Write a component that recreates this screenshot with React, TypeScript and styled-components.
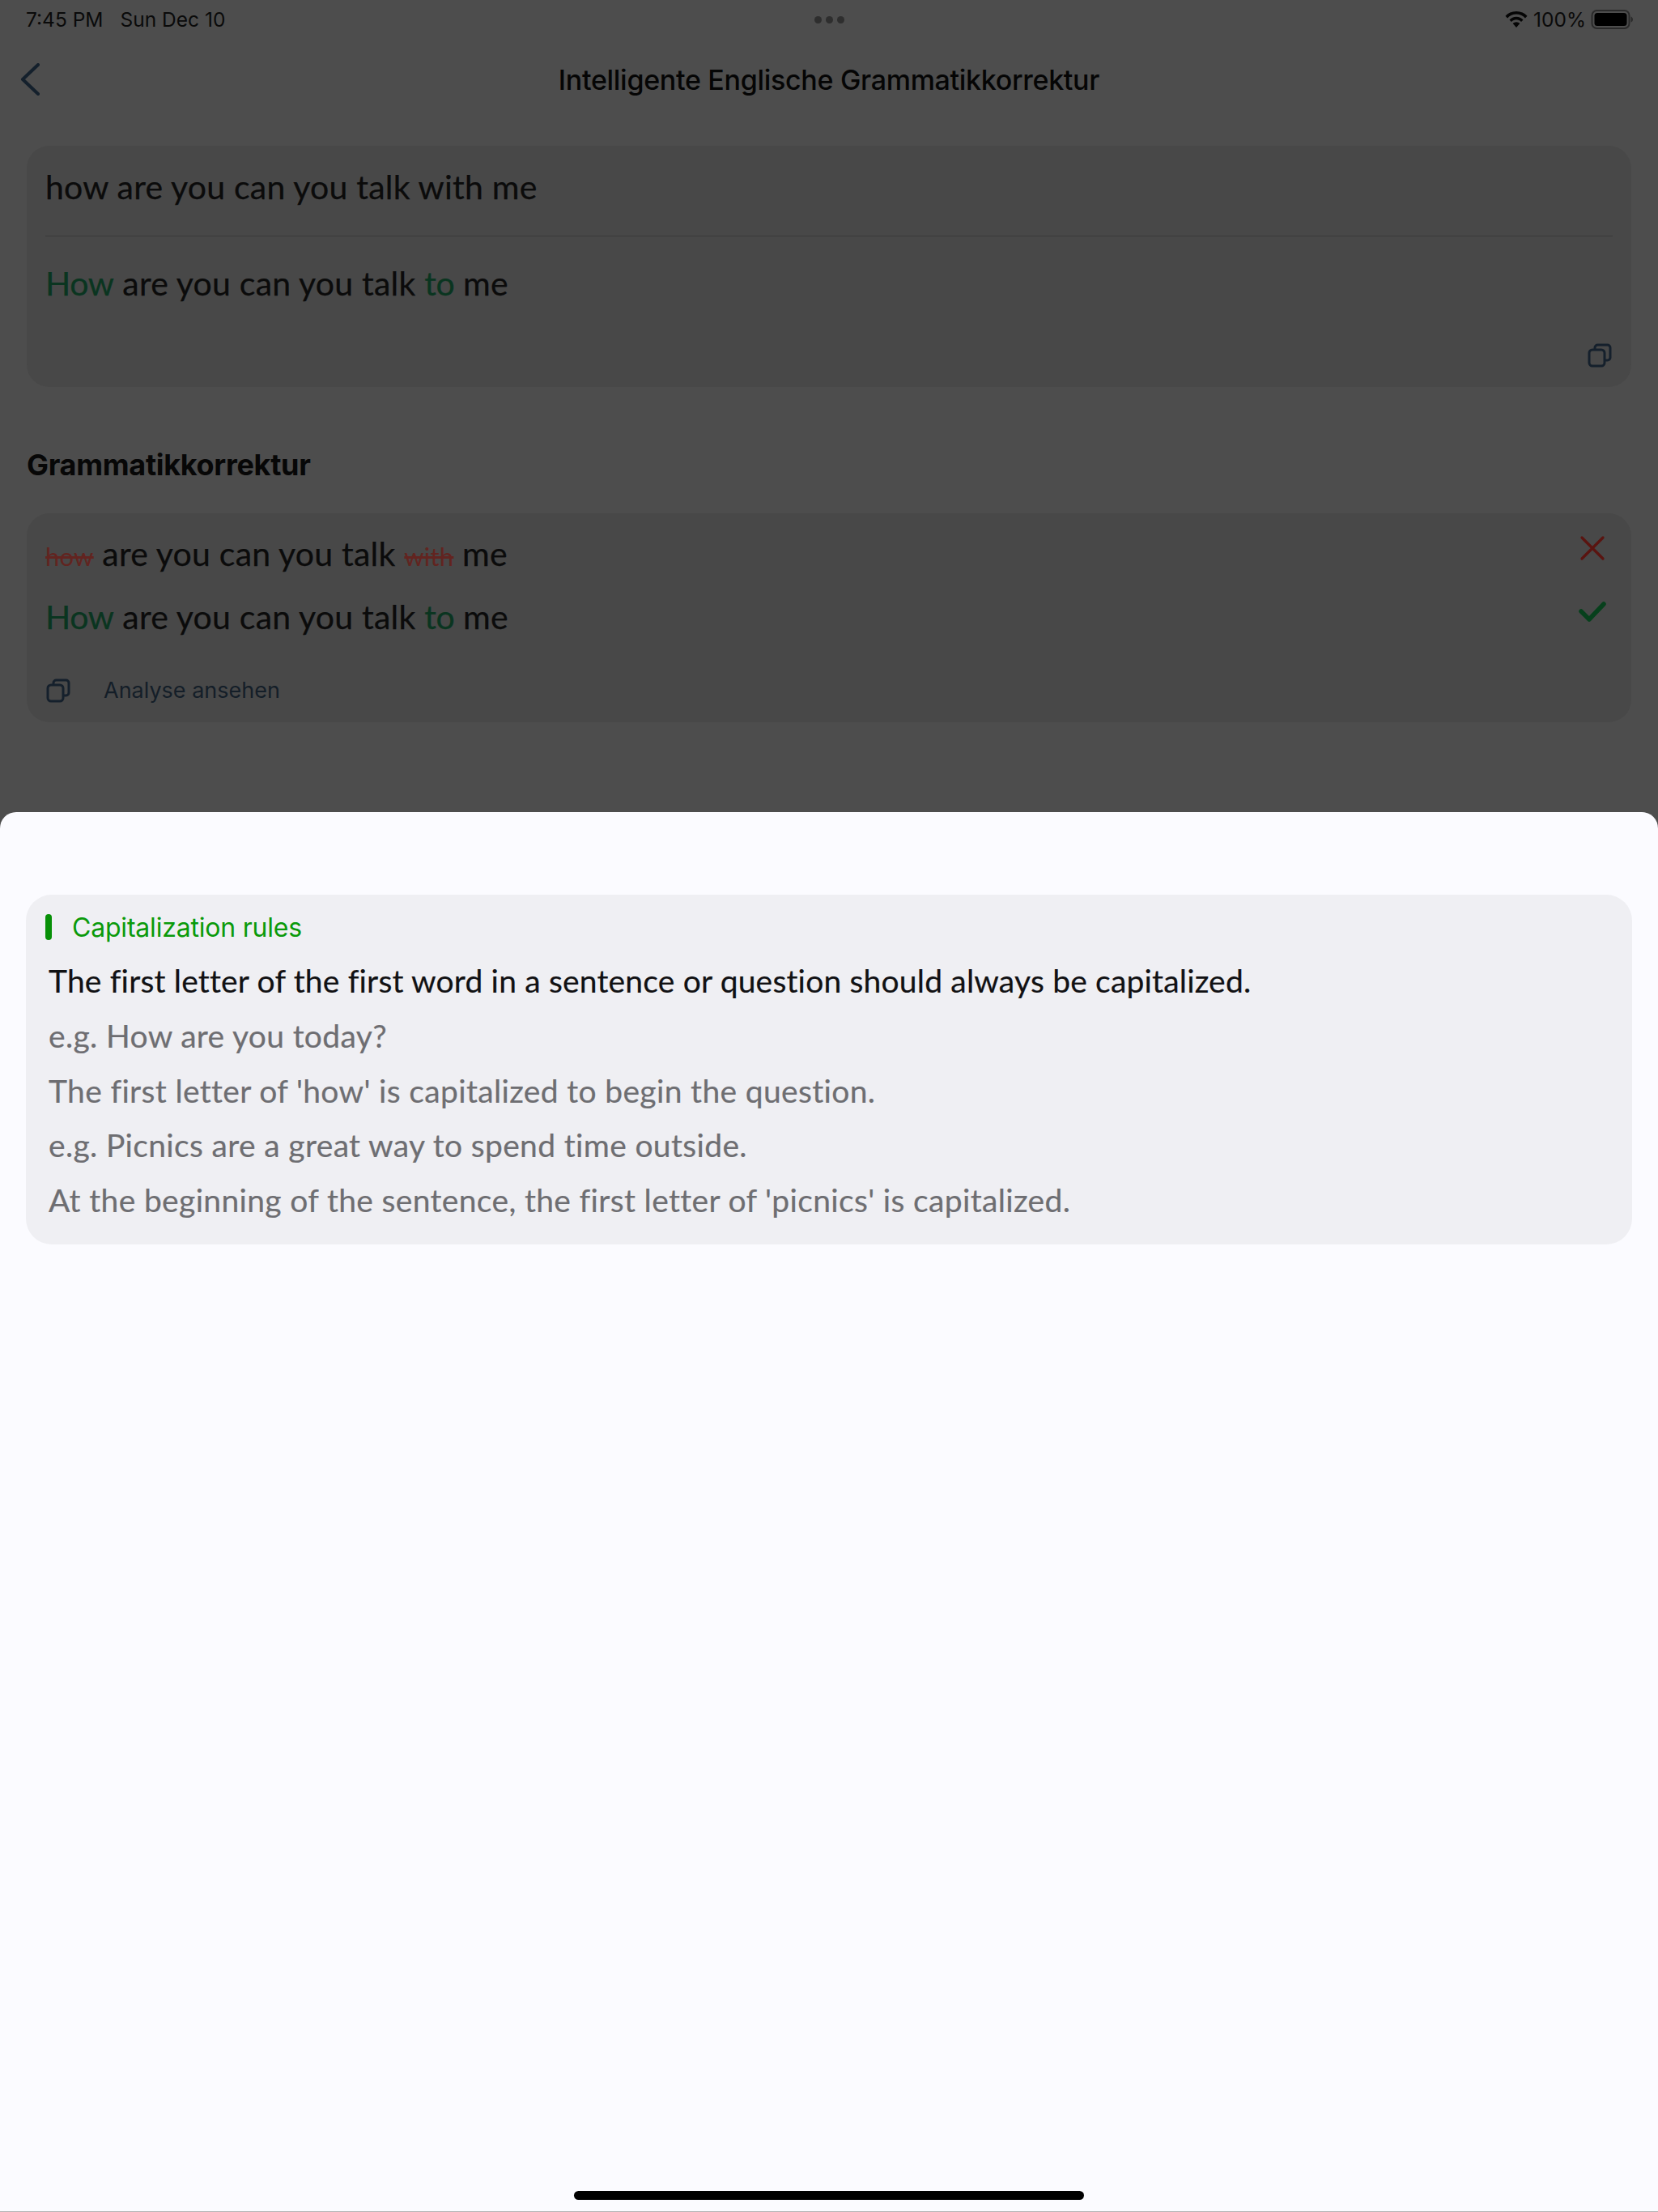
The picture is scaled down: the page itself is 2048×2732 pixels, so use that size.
import React from "react";
import styled, { createGlobalStyle } from "styled-components";

const Global = createGlobalStyle`
  html, body { margin: 0; padding: 0; background: #fbfbff; }
  * { box-sizing: border-box; }
`;

const sans = `Inter, "Liberation Sans", sans-serif`;
const humanist = `Lato, "Open Sans", sans-serif`;

const Screen = styled.div`
  width: 2048px;
  height: 2732px;
  display: flex;
  flex-direction: column;
  overflow: hidden;
  background: #fbfbff;
`;

const Dimmed = styled.div`
  height: 1024px;
  flex: none;
  background: #4d4d4d;
  padding: 0 33px;
  display: flex;
  flex-direction: column;
`;

const StatusBar = styled.div`
  height: 48px;
  margin-right: -2px;
  display: grid;
  grid-template-columns: 1fr auto 1fr;
  align-items: center;
  font: 400 24.5px ${sans};
  color: #0a0a0a;
`;

const StatusLeft = styled.div`
  display: flex;
  gap: 21px;
  margin-left: -1px;
`;

const Dots = styled.div`
  display: flex;
  gap: 5px;
  margin-right: 2px;
`;

const Dot = styled.span`
  width: 9px;
  height: 9px;
  border-radius: 50%;
  background: #2e2e2e;
`;

const StatusRight = styled.div`
  display: flex;
  justify-content: flex-end;
  align-items: center;
  gap: 6px;
`;

const NavBar = styled.div`
  height: 100px;
  display: grid;
  grid-template-columns: 1fr auto 1fr;
  align-items: center;
`;

const BackIcon = styled.svg`
  width: 26px;
  height: 40px;
  margin-left: -10px;
  display: block;
`;

const Title = styled.h1`
  margin: 0;
  font: 500 34px ${sans};
  letter-spacing: -0.3px;
  color: #050505;
`;

const Card = styled.div`
  background: #484848;
  border-radius: 28px;
  width: 1982px;
  flex: none;
`;

const InputCard = styled(Card)`
  margin-top: 32px;
  height: 298px;
  padding: 0 23px;
  display: flex;
  flex-direction: column;
`;

const Sentence = styled.div<{ $h: number; $shift?: number }>`
  height: ${(p) => p.$h}px;
  padding-bottom: ${(p) => p.$shift ?? 0}px;
  display: flex;
  align-items: center;
  font: 400 41px ${humanist};
  letter-spacing: 0.22px;
  -webkit-text-stroke: 0.25px #0b0b0b;
  color: #0b0b0b;
  white-space: pre;
`;

const Green = styled.span`
  color: #0a3520;
  -webkit-text-stroke: 0.25px #0a3520;
  letter-spacing: -0.4px;
`;

const Struck = styled.span`
  color: #622420;
  -webkit-text-stroke: 0;
  font-size: 31px;
  text-decoration: line-through;
`;

const Divider = styled.div`
  height: 1px;
  background: #3a3a3a;
  flex: none;
`;

const CopyRow = styled.div`
  display: flex;
  justify-content: flex-end;
  margin-right: 1px;
`;

const CopyIcon = styled.svg`
  width: 30px;
  height: 30px;
  display: block;
  flex: none;
`;

const SectionTitle = styled.h2`
  margin: 0;
  height: 156px;
  padding-top: 36px;
  display: flex;
  align-items: center;
  font: 700 36px ${sans};
  letter-spacing: -0.3px;
  color: #070707;
`;

const CorrectionCard = styled(Card)`
  height: 258px;
  padding: 10px 23px 0;
`;

const CorrectionRow = styled.div`
  height: 78px;
  display: flex;
  align-items: center;
  justify-content: space-between;
`;

const MarkIcon = styled.svg`
  width: 36px;
  height: 36px;
  display: block;
  margin: 0 7px 11px 0;
`;

const AnalysisRow = styled.div`
  margin: 36px 0 0 1px;
  display: flex;
  align-items: center;
  gap: 41px;
  font: 400 27px ${sans};
  color: #141e28;
`;

const Sheet = styled.div`
  flex: 1;
  background: #fbfbff;
  border-radius: 20px 20px 0 0;
  margin-top: -21px;
  padding: 102px 32px 0;
  display: flex;
  flex-direction: column;
  border-bottom: 1px solid #b4b4b4;
`;

const RuleCard = styled.div`
  height: 432px;
  background: #efeff3;
  border-radius: 32px;
  padding: 21px 28px 0;
  flex: none;
`;

const RuleHead = styled.div`
  display: flex;
  align-items: center;
  gap: 25px;
  margin-left: -4px;
  height: 38px;
  font: 400 32px ${sans};
  letter-spacing: -0.2px;
  color: #0a9a0a;
`;

const RuleBar = styled.span`
  width: 8px;
  height: 32px;
  border-radius: 4px;
  background: #079007;
`;

const RuleLines = styled.div`
  margin-top: 14px;
`;

const RuleLine = styled.div<{ $strong?: boolean }>`
  height: 67.75px;
  font: 400 39px/67.75px ${humanist};
  letter-spacing: ${(p) => (p.$strong ? "0.18px" : "0.34px")};
  color: ${(p) => (p.$strong ? "#111113" : "#6e6e72")};
  -webkit-text-stroke: 0.2px ${(p) => (p.$strong ? "#111113" : "#6e6e72")};
  white-space: pre;
`;

const HomeWrap = styled.div`
  margin-top: auto;
  height: 25px;
  display: flex;
  justify-content: center;
`;

const HomeBar = styled.div`
  width: 630px;
  height: 11px;
  border-radius: 6px;
  background: #000;
`;

const Copy = () => (
  <CopyIcon viewBox="0 0 30 30" fill="none" stroke="#15202c" strokeWidth="3">
    <rect x="2" y="8" width="19" height="20" rx="4" />
    <path d="M9 7V5.500A3.500 3.500 0 0 1 12.500 2H24.500A3.500 3.500 0 0 1 28 5.500V17.500A3.500 3.500 0 0 1 24.500 21H22" />
  </CopyIcon>
);

export default function App() {
  return (
    <Screen>
      <Global />
      <Dimmed>
        <StatusBar>
          <StatusLeft>
            <span>7:45 PM</span>
            <span>Sun Dec 10</span>
          </StatusLeft>
          <Dots>
            <Dot />
            <Dot />
            <Dot />
          </Dots>
          <StatusRight>
            <svg width="30" height="24" viewBox="0 0 30 24" fill="#050505">
              <path d="M15 2C9.300 2 4.700 4.200 1.500 7.800l2.600 2.600C6.900 7.300 10.700 5.500 15 5.500s8.100 1.800 10.900 4.900l2.600-2.600C25.300 4.200 20.700 2 15 2z" />
              <path d="M15 8.800c-3.400 0-6.400 1.400-8.500 3.700l2.500 2.500c1.500-1.700 3.700-2.700 6-2.700s4.500 1 6 2.700l2.500-2.500C21.400 10.200 18.400 8.800 15 8.800z" />
              <path d="M15 15.200c-1.700 0-3.200.7-4.300 1.900L15 22l4.300-4.900c-1.100-1.200-2.600-1.900-4.300-1.900z" />
            </svg>
            <span>100%</span>
            <svg width="52" height="24" viewBox="0 0 52 24">
              <rect x="1.500" y="1" width="46" height="22" rx="6" fill="none" stroke="#2a2a2a" strokeWidth="2" />
              <rect x="4.500" y="4" width="40" height="16" rx="3.500" fill="#000" />
              <path d="M49.500 8.500C51 9 52 10.500 52 12s-1 3-2.500 3.500z" fill="#2a2a2a" />
            </svg>
          </StatusRight>
        </StatusBar>
        <NavBar>
          <BackIcon viewBox="0 0 26 40" fill="none" stroke="#14202c" strokeWidth="4" strokeLinecap="round" strokeLinejoin="round">
            <path d="M24 2 5 20l19 18" />
          </BackIcon>
          <Title>Intelligente Englische Grammatikkorrektur</Title>
        </NavBar>
        <InputCard>
          <Sentence $h={111} $shift={10}>how are you can you talk with me</Sentence>
          <Divider />
          <Sentence $h={132} $shift={18}>
            <span>
              <Green>How</Green> are you can you talk <Green>to</Green> me
            </span>
          </Sentence>
          <CopyRow>
            <Copy />
          </CopyRow>
        </InputCard>
        <SectionTitle>Grammatikkorrektur</SectionTitle>
        <CorrectionCard>
          <CorrectionRow>
            <Sentence $h={78}>
              <span>
                <Struck>how</Struck> are you can you talk <Struck>with</Struck> me
              </span>
            </Sentence>
            <MarkIcon viewBox="0 0 36 36" fill="none" stroke="#5a1410" strokeWidth="3.200" strokeLinecap="round">
              <path d="M5 4 31 30M31 4 5 30" />
            </MarkIcon>
          </CorrectionRow>
          <CorrectionRow>
            <Sentence $h={78}>
              <span>
                <Green>How</Green> are you can you talk <Green>to</Green> me
              </span>
            </Sentence>
            <MarkIcon viewBox="0 0 36 36" fill="none" stroke="#07401c" strokeWidth="5.500" strokeLinecap="round" strokeLinejoin="round">
              <path d="M4 17l10 10L32 8" />
            </MarkIcon>
          </CorrectionRow>
          <AnalysisRow>
            <Copy />
            <span>Analyse ansehen</span>
          </AnalysisRow>
        </CorrectionCard>
      </Dimmed>
      <Sheet>
        <RuleCard>
          <RuleHead>
            <RuleBar />
            <span>Capitalization rules</span>
          </RuleHead>
          <RuleLines>
            <RuleLine $strong>The first letter of the first word in a sentence or question should always be capitalized.</RuleLine>
            <RuleLine>e.g. How are you today?</RuleLine>
            <RuleLine>The first letter of 'how' is capitalized to begin the question.</RuleLine>
            <RuleLine>e.g. Picnics are a great way to spend time outside.</RuleLine>
            <RuleLine>At the beginning of the sentence, the first letter of 'picnics' is capitalized.</RuleLine>
          </RuleLines>
        </RuleCard>
        <HomeWrap>
          <HomeBar />
        </HomeWrap>
      </Sheet>
    </Screen>
  );
}
